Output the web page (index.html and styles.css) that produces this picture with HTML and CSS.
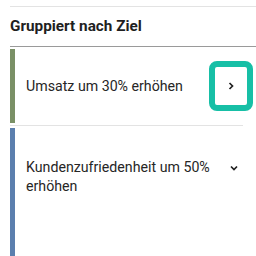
FILE: index.html
```html
<!DOCTYPE html>
<html lang="de">
<head>
<meta charset="utf-8">
<link rel="stylesheet" href="styles.css">
</head>
<body>
<div class="panel">
  <div class="topline"></div>
  <h2 class="heading">Gruppiert nach Ziel</h2>
  <div class="divider-strong"></div>
  <div class="item item-green">
    <span class="label">Umsatz um 30% erhöhen</span>
    <button class="toggle focused" aria-label="Aufklappen">
      <svg width="10" height="10" viewBox="0 0 10 10"><path d="M3.5 2 L6.5 5 L3.5 8" fill="none" stroke="#212121" stroke-width="1.7"/></svg>
    </button>
  </div>
  <div class="sep"></div>
  <div class="item item-blue">
    <span class="label">Kundenzufriedenheit um 50% erhöhen</span>
    <span class="chev">
      <svg width="10" height="10" viewBox="0 0 10 10"><path d="M2 3.5 L5 6.5 L8 3.5" fill="none" stroke="#212121" stroke-width="1.7"/></svg>
    </span>
  </div>
</div>
</body>
</html>
```
FILE: styles.css
```css
* { box-sizing: border-box; }
html, body { margin: 0; padding: 0; background: #fff; }
body { font-family: Roboto, "Liberation Sans", sans-serif; color: #212121; width: 256px; height: 256px; overflow: hidden; }
.panel { padding: 6px 0 0 10px; }
.topline { border-top: 1px solid #e3e3e3; }
.heading { margin: 0; font-size: 15.3px; font-weight: 700; line-height: 18px; padding: 10px 0 11px; color: #1f1f1f; }
.divider-strong { border-top: 1px solid #9a9a9a; }
.item { display: flex; align-items: center; border-left: 5px solid #7a9066; padding-left: 11px; margin-top: 2px; margin-right: 3px; }
.item-green { height: 74px; }
.item-blue { border-left-color: #5b7fae; min-height: 130px; align-items: flex-start; padding-top: 30px; }
.label { flex: 1; font-size: 14.2px; line-height: 19px; color: #262626; }
.toggle { width: 44px; height: 50px; border: 6px solid #17bfa6; border-radius: 8px; background: #fff; display: flex; align-items: center; justify-content: center; padding: 0; }
.sep { border-top: 1px solid #e3e3e3; margin: 2px 13px 0 0; }
.chev { width: 30px; display: flex; justify-content: center; padding-top: 5px; margin-right: 4px; }
```
